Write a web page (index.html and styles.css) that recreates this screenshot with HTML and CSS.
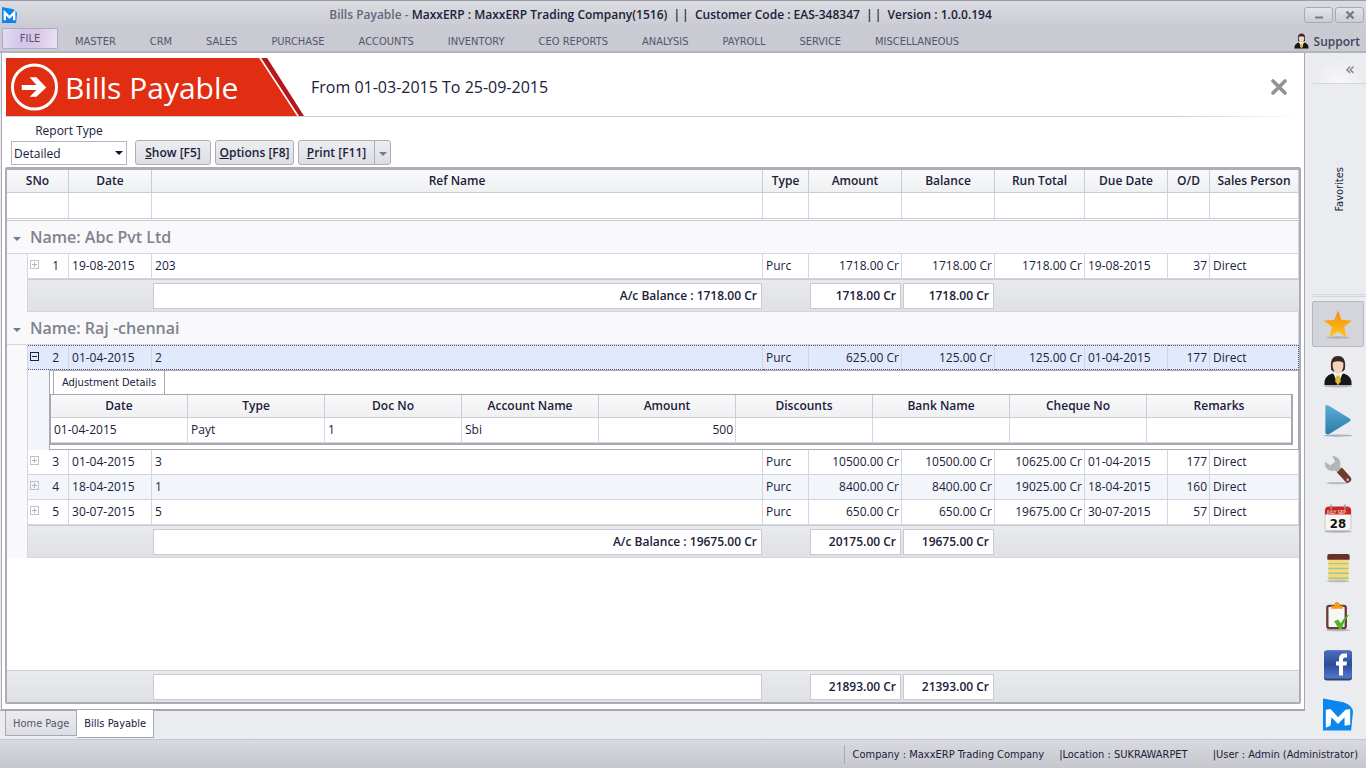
FILE: index.html
```
<!DOCTYPE html>
<html lang="en">
<head>
    <meta charset="UTF-8">
    <meta name="viewport" content="width=device-width, initial-scale=1.0">
    <title>Bills Payable - MaxxERP</title>
    <link rel="stylesheet" href="styles.css">
</head>
<body>
    <header class="title-bar">
        <svg class="app-logo" viewBox="0 0 32 34"><path d="M0 0 L22 4 Q31 7 32 14 L30 34 H0 Z" fill="#0b86ee"/><path d="M6 28 V12 L16 22 L26 12 V28" fill="none" stroke="#fff" stroke-width="5"/></svg>
        <h1><span>Bills Payable - </span>MaxxERP : MaxxERP Trading Company(1516) &nbsp;|&thinsp;| &nbsp;Customer Code : EAS-348347 &nbsp;|&thinsp;| &nbsp;Version : 1.0.0.194</h1>
        <div class="window-buttons">
            <button aria-label="Minimize"><svg viewBox="0 0 12 12"><path d="M2 8.5h8" stroke="#777a8c" stroke-width="2"/></svg></button>
            <button aria-label="Close"><svg viewBox="0 0 12 12"><path d="M2.5 2.5l7 7M9.5 2.5l-7 7" stroke="#777a8c" stroke-width="2.4"/></svg></button>
        </div>
    </header>

    <nav class="menu-bar">
        <button class="file-button">FILE</button>
        <div class="menu-items">
            <button>MASTER</button>
            <button>CRM</button>
            <button>SALES</button>
            <button>PURCHASE</button>
            <button>ACCOUNTS</button>
            <button>INVENTORY</button>
            <button>CEO REPORTS</button>
            <button>ANALYSIS</button>
            <button>PAYROLL</button>
            <button>SERVICE</button>
            <button>MISCELLANEOUS</button>
        </div>
        <a class="support" href="#">
            <svg viewBox="0 0 30 34"><use href="#agent"/></svg>
            Support
        </a>
    </nav>

    <!-- shared agent icon -->
    <svg class="defs" width="0" height="0">
        <symbol id="agent" viewBox="0 0 30 34">
            <ellipse cx="15" cy="32" rx="15" ry="1.5" fill="#b5b6bb"/>
            <path d="M1 31 Q0 22 9 19 L15 22 L21 19 Q30 22 29 31 Z" fill="#15161a"/>
            <path d="M10 18 L15 31 L20 18 Z" fill="#f4f4f4"/>
            <path d="M13.5 21h3l1.500 6-3 4-3-4z" fill="#e8b62c"/>
            <path d="M8 15 Q6 1 15 1 Q24 1 22 15 L20 17 H10 Z" fill="#3b2620"/>
            <path d="M9.500 8 Q15 5 20.500 8 V12 Q19 19 15 19.500 Q11 19 9.500 12 Z" fill="#f2d3bd"/>
        </symbol>
    </svg>

    <div class="workspace">
        <main class="panel">
            <div class="page-head">
                <div class="banner">
                    <svg class="banner-shape" viewBox="0 0 300 58" preserveAspectRatio="none">
                        <path d="M0 0H254L292 58H0Z" fill="#e12d11"/>
                        <path d="M256 0H262L299 58H294Z" fill="#b5171a"/>
                    </svg>
                    <svg class="banner-icon" viewBox="0 0 50 50"><circle cx="25" cy="25" r="22.5" fill="none" stroke="#fff" stroke-width="3"/><path d="M12 23h15l-7-8h7l10 10.5L27 35h-7l7-7H12z" fill="#fff"/></svg>
                    <h2>Bills Payable</h2>
                </div>
                <p class="period">From 01-03-2015 To 25-09-2015</p>
                <button class="close-page" aria-label="Close page"><svg viewBox="0 0 16 16"><path d="M2 2l12 12M14 2L2 14" stroke="#929292" stroke-width="3.6" stroke-linecap="round"/></svg></button>
            </div>

            <div class="toolbar">
                <div class="field">
                    <label for="report-type">Report Type</label>
                    <div class="select-box">
                        <select id="report-type">
                            <option>Detailed</option>
                        </select>
                    </div>
                </div>
                <button class="tool-button show"><span><u>S</u>how [F5]</span></button>
                <button class="tool-button options"><span><u>O</u>ptions [F8]</span></button>
                <div class="split-button">
                    <button class="tool-button print"><span><u>P</u>rint [F11]</span></button>
                    <button class="tool-button arrow" aria-label="Print options"><i class="caret"></i></button>
                </div>
            </div>

            <div class="grid">
                <table class="bills">
                    <colgroup>
                        <col class="c-gutter"><col class="c-sno"><col class="c-date"><col><col class="c-type"><col class="c-money"><col class="c-money"><col class="c-run"><col class="c-date"><col class="c-od"><col class="c-person">
                    </colgroup>
                    <thead>
                        <tr>
                            <th colspan="2">SNo</th><th>Date</th><th>Ref Name</th><th>Type</th><th>Amount</th><th>Balance</th><th>Run Total</th><th>Due Date</th><th>O/D</th><th>Sales Person</th>
                        </tr>
                        <tr class="filter-row">
                            <td colspan="2"></td><td></td><td></td><td></td><td></td><td></td><td></td><td></td><td></td><td></td>
                        </tr>
                    </thead>
                    <tbody>
                        <tr class="group-row"><td colspan="11"><i class="caret"></i>Name: Abc Pvt Ltd</td></tr>
                        <tr>
                            <td class="gutter"></td><td class="sno"><button class="expander" aria-label="Expand"></button>1</td><td class="date">19-08-2015</td><td>203</td><td>Purc</td><td class="num">1718.00 Cr</td><td class="num">1718.00 Cr</td><td class="num">1718.00 Cr</td><td>19-08-2015</td><td class="num">37</td><td>Direct</td>
                        </tr>
                        <tr class="sum-row">
                            <td class="gutter"></td><td></td><td></td><td><div>A/c Balance : 1718.00 Cr</div></td><td></td><td><div>1718.00 Cr</div></td><td><div>1718.00 Cr</div></td><td></td><td></td><td></td><td></td>
                        </tr>

                        <tr class="group-row"><td colspan="11"><i class="caret"></i>Name: Raj -chennai</td></tr>
                        <tr class="selected">
                            <td class="gutter"></td><td class="sno"><button class="expander open" aria-label="Collapse"></button>2</td><td class="date">01-04-2015</td><td>2</td><td>Purc</td><td class="num">625.00 Cr</td><td class="num">125.00 Cr</td><td class="num">125.00 Cr</td><td>01-04-2015</td><td class="num">177</td><td>Direct</td>
                        </tr>
                        <tr class="detail-row">
                            <td class="gutter"></td>
                            <td colspan="10">
                                <div class="detail">
                                    <button class="detail-tab">Adjustment Details</button>
                                    <table class="adjustments">
                                        <thead>
                                            <tr><th>Date</th><th>Type</th><th>Doc No</th><th>Account Name</th><th>Amount</th><th>Discounts</th><th>Bank Name</th><th>Cheque No</th><th class="last">Remarks</th></tr>
                                        </thead>
                                        <tbody>
                                            <tr><td>01-04-2015</td><td>Payt</td><td>1</td><td>Sbi</td><td class="num">500</td><td></td><td></td><td></td><td></td></tr>
                                        </tbody>
                                    </table>
                                </div>
                            </td>
                        </tr>
                        <tr>
                            <td class="gutter"></td><td class="sno"><button class="expander" aria-label="Expand"></button>3</td><td class="date">01-04-2015</td><td>3</td><td>Purc</td><td class="num">10500.00 Cr</td><td class="num">10500.00 Cr</td><td class="num">10625.00 Cr</td><td>01-04-2015</td><td class="num">177</td><td>Direct</td>
                        </tr>
                        <tr class="alt">
                            <td class="gutter"></td><td class="sno"><button class="expander" aria-label="Expand"></button>4</td><td class="date">18-04-2015</td><td>1</td><td>Purc</td><td class="num">8400.00 Cr</td><td class="num">8400.00 Cr</td><td class="num">19025.00 Cr</td><td>18-04-2015</td><td class="num">160</td><td>Direct</td>
                        </tr>
                        <tr>
                            <td class="gutter"></td><td class="sno"><button class="expander" aria-label="Expand"></button>5</td><td class="date">30-07-2015</td><td>5</td><td>Purc</td><td class="num">650.00 Cr</td><td class="num">650.00 Cr</td><td class="num">19675.00 Cr</td><td>30-07-2015</td><td class="num">57</td><td>Direct</td>
                        </tr>
                        <tr class="sum-row">
                            <td class="gutter"></td><td></td><td></td><td><div>A/c Balance : 19675.00 Cr</div></td><td></td><td><div>20175.00 Cr</div></td><td><div>19675.00 Cr</div></td><td></td><td></td><td></td><td></td>
                        </tr>
                    </tbody>
                </table>

                <table class="bills totals">
                    <colgroup>
                        <col class="c-gutter"><col class="c-sno"><col class="c-date"><col><col class="c-type"><col class="c-money"><col class="c-money"><col class="c-run"><col class="c-date"><col class="c-od"><col class="c-person">
                    </colgroup>
                    <tbody>
                        <tr class="sum-row">
                            <td></td><td></td><td></td><td><div></div></td><td></td><td><div>21893.00 Cr</div></td><td><div>21393.00 Cr</div></td><td></td><td></td><td></td><td></td>
                        </tr>
                    </tbody>
                </table>
            </div>
        </main>

        <aside class="rail">
            <button class="collapse" aria-label="Collapse">«</button>
            <div class="favorites"><span>Favorites</span></div>
            <div class="rail-icons">
                <button class="active" aria-label="Favorites">
                    <svg viewBox="0 0 30 30"><defs><linearGradient id="gold" x2="0" y2="1"><stop stop-color="#f58a12"/><stop offset="1" stop-color="#ffc717"/></linearGradient></defs><ellipse cx="15" cy="28" rx="12" ry="1.2" fill="#aeb0b6"/><path d="M15 1l3.6 9.5 10.4.5-8 6.600 2.700 10.400-8.700-6-8.700 6L9 17.600 1 11l10.400-.5z" fill="url(#gold)"/></svg>
                </button>
                <button aria-label="Support"><svg viewBox="0 0 30 34"><use href="#agent"/></svg></button>
                <button aria-label="Run"><svg viewBox="0 0 30 34"><defs><linearGradient id="blue" x2="0" y2="1"><stop stop-color="#5bacd6"/><stop offset="1" stop-color="#2a7ba8"/></linearGradient></defs><ellipse cx="15" cy="32.5" rx="15" ry="1.2" fill="#aeb0b6"/><path d="M2 2Q3 0 6 2L27 15Q29 17 27 18L6 31Q3 32 2 30Z" fill="url(#blue)"/></svg></button>
                <button aria-label="Tools"><svg viewBox="0 0 30 34"><ellipse cx="14" cy="31" rx="11" ry="1.2" fill="#b8b9be"/><path d="M9 3Q15 3 17 8Q18 11 17 14L20 18 16 22 12 18Q5 20 2 14Q1 11 2 9L7 13 12 9Z" fill="#b3b5b7"/><path d="M14 20l5-5 9 10q2 3-1 5t-4 0z" fill="#713a2f"/><circle cx="25" cy="27.5" r="1.300" fill="#dcc4bd"/></svg></button>
                <button aria-label="Calendar"><svg viewBox="0 0 30 30"><ellipse cx="15" cy="28" rx="14" ry="1.2" fill="#aeb0b6"/><rect x="2" y="4" width="26" height="23" rx="3" fill="#f6f6f6" stroke="#c9c9c9"/><path d="M2 11V7q0-4 4-4h18q4 0 4 4v4z" fill="#c8261f"/><path d="M8 1v5M22 1v5" stroke="#9c9ca0" stroke-width="1.5"/><text x="4" y="10" class="cal-month">JULY SEP</text><text x="15" y="24" class="cal-day">28</text></svg></button>
                <button aria-label="Notes"><svg viewBox="0 0 30 34"><ellipse cx="15" cy="31" rx="12" ry="1.2" fill="#b8b9be"/><rect x="5" y="6" width="21" height="24" fill="#fcd775"/><path d="M4 9V5q0-2 2-2h19q2 0 2 2v4z" fill="#67312a"/><path d="M5 13h21M5 18h21M5 23h21M5 28h21" stroke="#8fc9b0" stroke-width="1.5"/></svg></button>
                <button aria-label="Tasks"><svg viewBox="0 0 30 34"><ellipse cx="15" cy="31" rx="13" ry="1.2" fill="#b8b9be"/><rect x="4" y="6" width="19" height="23" rx="2" fill="#f7f7f7" stroke="#6b3a32" stroke-width="2.4"/><path d="M8 9V6h3q0-4 3-4t3 4h3v3z" fill="#f39c1b"/><path d="M11 22l4-2 3 4q4-8 9-9-6 6-8 15h-3z" fill="#55b423"/></svg></button>
                <button aria-label="Facebook"><svg viewBox="0 0 30 32"><defs><linearGradient id="fb" x2="0" y2="1"><stop stop-color="#4a6ec0"/><stop offset=".5" stop-color="#2c4c97"/><stop offset="1" stop-color="#5179d2"/></linearGradient></defs><rect x="1" y="1" width="28" height="30" rx="3" fill="#34415f"/><rect x="1" y="1" width="28" height="28" rx="3" fill="url(#fb)"/><path d="M16 26V16h-3v-4h3V9.500Q16 4 21 4h3v4h-2q-2 0-2 2v2h4l-.5 4H20v10z" fill="#fff"/></svg></button>
                <button aria-label="MaxxERP"><svg viewBox="0 0 32 34"><path d="M0 0L22 4Q31 7 32 14L30 34H0Z" fill="#0b86ee"/><path d="M3 31V12L8 11 16 20 24 12 29 11V28L23 29V20L16 27 9 20 8 29Z" fill="#fff"/></svg></button>
            </div>
        </aside>
    </div>

    <nav class="page-tabs">
        <button>Home Page</button>
        <button class="current">Bills Payable</button>
    </nav>

    <footer class="status-bar">
        <span class="company">Company : MaxxERP Trading Company</span>
        <span>|Location : SUKRAWARPET</span>
        <span class="user">|User : Admin (Administrator)</span>
    </footer>
</body>
</html>
```
FILE: styles.css
```
:root {
    --chrome: #c9cad2;
    --pane: #ebecf0;
    --line: #d4d5dd;
    --frame: #a7a8b2;
    --text: #20203a;
    --ui-font: "DejaVu Sans Condensed", "DejaVu Sans", sans-serif;
    --grid-font: "Open Sans", "Noto Sans", sans-serif;
}

* {
    box-sizing: border-box;
    margin: 0;
    padding: 0;
}

body {
    min-height: 100vh;
    display: flex;
    flex-direction: column;
    background: var(--pane);
    color: var(--text);
    font-family: var(--ui-font);
    font-size: 11px;
}

button {
    border: none;
    background: none;
    font: inherit;
    color: inherit;
    cursor: pointer;
}

.defs {
    position: absolute;
}

.caret {
    display: inline-block;
    border: 4px solid transparent;
    border-top-color: #777a8c;
    border-bottom: none;
}

/* title bar */
.title-bar {
    display: flex;
    align-items: center;
    height: 28px;
    padding: 0 2px;
    border-top: 1px solid #9a9aad;
    background: linear-gradient(#dcdde1, var(--chrome));
}

.app-logo {
    width: 15px;
    height: 16px;
}

.title-bar h1 {
    flex: 1;
    text-align: center;
    font-family: var(--grid-font);
    font-size: 12px;
    font-weight: 600;
}

.title-bar h1 span {
    color: #66677c;
}

.window-buttons {
    display: flex;
    gap: 2px;
}

.window-buttons button {
    width: 29px;
    height: 16px;
    border: 1px solid var(--frame);
    border-radius: 3px;
    background: linear-gradient(#e4e5e9, #cccdd4);
}

.window-buttons svg {
    display: block;
    width: 12px;
    height: 12px;
    margin: 0 auto;
}

/* menu */
.menu-bar {
    display: flex;
    align-items: center;
    height: 25px;
    padding: 0 6px 0 2px;
    border-bottom: 2px solid #b2b3bb;
    background: var(--chrome);
    color: #55566b;
}

.file-button {
    align-self: flex-start;
    width: 56px;
    height: 21px;
    border: 1px solid #b0a9c6;
    border-radius: 2px;
    background: linear-gradient(100deg, #e3dcf1, #d3c6ea 35%, #dcc3e6 60%, #e9e5f6);
}

.menu-items {
    flex: 1;
    display: flex;
    padding-top: 3px;
}

.menu-items button {
    padding: 2px 17px;
}

.support {
    display: flex;
    align-items: center;
    gap: 5px;
    padding-top: 3px;
    color: #44455c;
    font-family: var(--grid-font);
    font-size: 12px;
    font-weight: 600;
    text-decoration: none;
}

.support svg {
    width: 15px;
    height: 17px;
}

/* workspace */
.workspace {
    flex: 1;
    display: flex;
}

.panel {
    flex: 1;
    display: flex;
    flex-direction: column;
    min-width: 0;
    margin-left: 1px;
    padding: 5px 3px 5px 3px;
    border: 1px solid var(--frame);
    border-top: none;
    background: #fff;
}

.page-head {
    display: flex;
    align-items: center;
    height: 59px;
    margin-left: 1px;
    padding-right: 14px;
    border-bottom: 1px solid;
    border-image: linear-gradient(90deg, #cdced6 90%, #fff) 1;
}

.banner {
    position: relative;
    display: flex;
    align-items: center;
    gap: 6px;
    width: 299px;
    height: 58px;
    padding-left: 4px;
}

.banner-shape {
    position: absolute;
    inset: 0;
    width: 100%;
    height: 100%;
}

.banner-icon {
    position: relative;
    width: 49px;
    height: 50px;
}

.banner h2 {
    position: relative;
    color: #fff;
    font-family: var(--grid-font);
    font-size: 30px;
    font-weight: 400;
}

.period {
    flex: 1;
    margin-left: 6px;
    font-family: var(--grid-font);
    font-size: 16px;
}

.close-page svg {
    display: block;
    width: 16px;
    height: 16px;
}

.toolbar {
    display: flex;
    align-items: flex-end;
    height: 50px;
    padding: 0 6px 2px;
    font-family: var(--grid-font);
    font-size: 12px;
}

.field {
    width: 116px;
    margin-right: 8px;
    text-align: center;
}

.field label {
    display: block;
    line-height: 21px;
}

.select-box {
    position: relative;
}

.select-box::after {
    content: "";
    position: absolute;
    top: 10px;
    right: 4px;
    border: 4px solid transparent;
    border-top: 4px solid #15152a;
    border-bottom: none;
    pointer-events: none;
}

.select-box select {
    display: block;
    appearance: none;
    width: 100%;
    height: 24px;
    padding: 0 2px;
    border: 1px solid #b5b6c0;
    background: #fff;
    color: var(--text);
    font: inherit;
}

.tool-button {
    height: 25px;
    border: 1px solid #adaeb8;
    border-radius: 3px;
    background: linear-gradient(#eceef1, #dcdde3);
    font-weight: 600;
}

.tool-button.show {
    width: 76px;
    margin-right: 4px;
}

.tool-button.options {
    width: 79px;
    margin-right: 4px;
}

.tool-button.print {
    width: 77px;
    border-radius: 3px 0 0 3px;
}

.tool-button.arrow {
    width: 17px;
    margin-left: -1px;
    border-radius: 0 3px 3px 0;
}

.tool-button .caret {
    vertical-align: middle;
}

.split-button {
    display: flex;
}

/* bills grid */
.grid {
    flex: 1;
    display: flex;
    flex-direction: column;
    justify-content: space-between;
    border: 2px solid #abacb6;
    border-top-width: 3px;
    border-radius: 2px;
    font-family: var(--grid-font);
    font-size: 12px;
}

.bills,
.adjustments {
    width: 100%;
    table-layout: fixed;
    border-collapse: separate;
    border-spacing: 0;
}

.c-gutter { width: 21px; }
.c-sno { width: 41px; }
.c-date { width: 83px; }
.c-type { width: 46px; }
.c-money { width: 93px; }
.c-run { width: 90px; }
.c-od { width: 42px; }
.c-person { width: 89px; }

.grid th,
.grid td {
    height: 25px;
    border-right: 1px solid var(--line);
    border-bottom: 1px solid var(--line);
    line-height: 18px;
    white-space: nowrap;
}

.grid th {
    height: 23px;
    background: linear-gradient(#fafafb, #eff0f2);
    border-color: #cbccd6;
    font-weight: 600;
    text-align: center;
}

.grid td {
    padding: 0 2px 0 3px;
}

.grid .num {
    text-align: right;
}

.grid .filter-row td {
    height: 28px;
    border-bottom: 3px double #cbccd6;
}

.grid .group-row td {
    height: 33px;
    padding-left: 6px;
    background: #f9f9fb;
    color: #80828e;
    font-size: 16px;
    font-weight: 600;
}

.group-row .caret {
    margin-right: 9px;
    vertical-align: middle;
}

.grid .gutter {
    padding: 0;
    background: #f9f9fb;
    border-bottom: none;
}

.grid .sno {
    padding: 0 9px 0 2px;
    text-align: right;
}

.expander {
    float: left;
    width: 9px;
    height: 9px;
    margin-top: 3px;
    border: 1px solid #c0c1cb;
    background:
        linear-gradient(#b4b5c0, #b4b5c0) center / 5px 1px no-repeat,
        linear-gradient(#b4b5c0, #b4b5c0) center / 1px 5px no-repeat;
}

.expander.open {
    border-color: #20203a;
    background: linear-gradient(#20203a, #20203a) center / 5px 1px no-repeat;
}

.alt td:not(.gutter) {
    background: #f2f6fb;
}

.grid .selected td:not(.gutter) {
    border-top: 1px dotted #50516a;
    border-bottom: 1px dotted #50516a;
    background: #e1eafd;
}

.grid .selected td:last-child {
    border-right: 1px dotted #50516a;
}

.grid .sum-row td {
    height: 33px;
    padding: 2px 1px 2px 1px;
    border-top: 1px solid #cbccd3;
    border-right: none;
    background: linear-gradient(#e9eaed, #e0e1e4);
    font-weight: 600;
}

.grid .sum-row .gutter {
    border-top: none;
    border-right: 1px solid var(--line);
    background: #f9f9fb;
}

.grid .sum-row td div {
    height: 26px;
    padding-right: 4px;
    border: 1px solid #c8c9d1;
    background: #fff;
    line-height: 24px;
    text-align: right;
}

.grid .totals td {
    height: 32px;
    border-bottom: none;
}

/* adjustment details under a bill */
.grid .detail-row > td {
    padding: 0;
    border-right: none;
    background: #f2f6fb;
}

.grid .detail-row > td.gutter {
    border-right: 1px solid var(--line);
    background: #f9f9fb;
}

.grid .detail-row > td:last-child {
    border-bottom: none;
}

.detail {
    height: 80px;
    margin-left: 21px;
    padding-right: 5px;
    border: 1px solid var(--frame);
    background: #fff;
}

.detail-tab {
    display: block;
    height: 23px;
    margin-left: 3px;
    padding: 0 8px;
    border: 1px solid var(--frame);
    border-top: none;
    border-bottom: none;
    font-family: var(--ui-font);
    font-size: 11px;
}

.adjustments {
    border: 1px solid var(--frame);
    border-width: 1px 2px 2px 1px;
}

.adjustments th {
    width: 137px;
}

.adjustments .last {
    width: auto;
}

.adjustments th:last-child,
.adjustments td:last-child {
    border-right: none;
}

/* right rail, runs down past the page tabs */
.rail {
    width: 61px;
    display: flex;
    flex-direction: column;
    align-items: center;
    margin-bottom: -29px;
}

.collapse {
    align-self: stretch;
    height: 31px;
    margin-left: 7px;
    padding: 0 11px 0 0;
    border-bottom: 1px solid var(--line);
    background: radial-gradient(circle at 50% 100%, #f8f8fa, transparent 60%);
    color: #77788c;
    font-size: 18px;
    text-align: right;
}

.favorites {
    flex: 1;
    align-self: stretch;
    display: flex;
    align-items: center;
    justify-content: center;
    margin-left: 7px;
    border-bottom: 3px double var(--line);
}

.favorites span {
    writing-mode: vertical-rl;
    transform: rotate(180deg);
}

.rail-icons {
    display: flex;
    flex-direction: column;
    margin: 4px 0 0 4px;
}

.rail-icons button {
    display: flex;
    align-items: center;
    justify-content: center;
    width: 52px;
    height: 49px;
}

.rail-icons .active {
    height: 46px;
    border: 1px solid #b5b6c1;
    border-radius: 2px;
    background: #d4d5db;
}

.rail-icons svg {
    width: 30px;
    height: 33px;
}

.cal-month {
    fill: #fff;
    font-size: 5px;
}

.cal-day {
    fill: #111;
    font-size: 13px;
    font-weight: 700;
    text-anchor: middle;
}

/* bottom */
.page-tabs {
    display: flex;
    align-items: flex-start;
    height: 29px;
    padding-left: 5px;
    margin-right: 61px;
    border-top: 1px solid var(--frame);
}

.page-tabs button {
    height: 25px;
    padding: 0 7px;
    border: 1px solid var(--frame);
    border-top: none;
    background: linear-gradient(#ebecf0, #dddee3);
    color: #55566b;
}

.page-tabs .current {
    height: 28px;
    margin-top: -1px;
    border-left: none;
    background: #fff;
    color: var(--text);
}

.status-bar {
    display: flex;
    align-items: center;
    justify-content: flex-end;
    gap: 15px;
    height: 29px;
    padding-right: 8px;
    border-top: 1px solid #c4c5ce;
    background: linear-gradient(#d9dadf, #c6c7ce);
}

.status-bar .company {
    padding: 3px 0 3px 8px;
    border-left: 1px solid var(--frame);
}

.status-bar .user {
    margin-left: 10px;
}
```
